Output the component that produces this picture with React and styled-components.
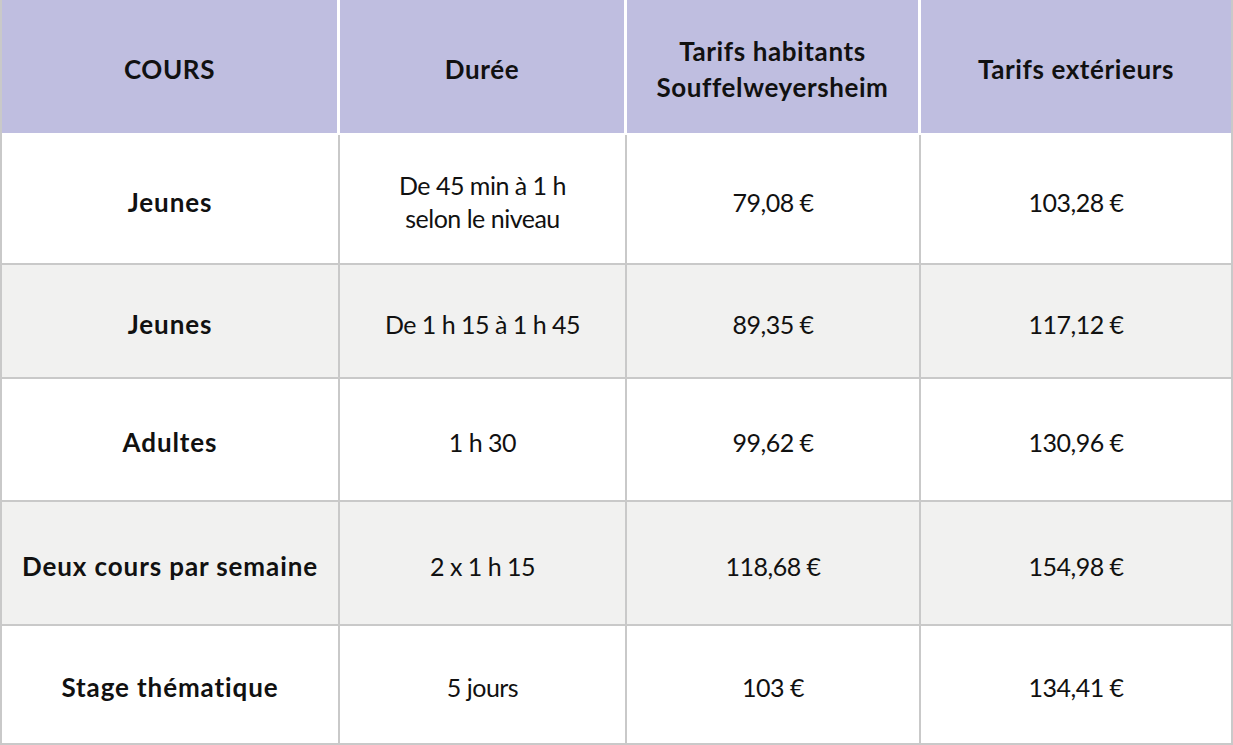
import React from 'react'
import styled, { createGlobalStyle } from 'styled-components'

const GlobalStyle = createGlobalStyle`
  html, body {
    margin: 0;
    padding: 0;
    background: #ffffff;
  }
  body {
    font-family: Lato, "Open Sans", "Liberation Sans", sans-serif;
    color: #111111;
  }
`

const COLS = '338px 287px 294px 1fr'

const Table = styled.div`
  width: 1233px;
  height: 745px;
  display: flex;
  flex-direction: column;
  box-sizing: border-box;
  border-left: 2px solid #c9c9c9;
  border-right: 2px solid #c9c9c9;
  border-bottom: 2px solid #c9c9c9;
`

const HeadRow = styled.div`
  display: grid;
  grid-template-columns: ${COLS};
  height: 135px;
  background: #bfbee0;
  border-bottom: 2px solid #ffffff;
  box-sizing: border-box;
`

const HeadCell = styled.div`
  display: flex;
  align-items: center;
  justify-content: center;
  text-align: center;
  font-weight: 700;
  font-size: 26px;
  line-height: 36px;
  letter-spacing: 0.6px;
  padding-top: 5px;
  box-sizing: border-box;
  border-right: 3px solid #ffffff;
  &:last-child { border-right: none; }
`

const Row = styled.div`
  display: grid;
  grid-template-columns: ${COLS};
  height: ${(p) => p.$h}px;
  background: ${(p) => (p.$shaded ? '#f1f1f0' : '#ffffff')};
  border-bottom: 2px solid #c9c9c9;
  box-sizing: border-box;
  &:last-child { border-bottom: none; }
`

const Cell = styled.div`
  display: flex;
  align-items: center;
  justify-content: center;
  text-align: center;
  font-weight: ${(p) => (p.$bold ? 700 : 400)};
  font-size: ${(p) => (p.$bold ? 26 : 25)}px;
  line-height: 33px;
  letter-spacing: ${(p) => (p.$bold ? '0.9px' : '-0.5px')};
  padding-top: 6px;
  box-sizing: border-box;
  border-right: 2px solid #c9c9c9;
  &:last-child { border-right: none; }
`

const rows = [
  { h: 130, cours: 'Jeunes', duree: ['De 45 min à 1 h', 'selon le niveau'], hab: '79,08 €', ext: '103,28 €' },
  { h: 114, cours: 'Jeunes', duree: ['De 1 h 15 à 1 h 45'], hab: '89,35 €', ext: '117,12 €' },
  { h: 123, cours: 'Adultes', duree: ['1 h 30'], hab: '99,62 €', ext: '130,96 €' },
  { h: 124, cours: 'Deux cours par semaine', duree: ['2 x 1 h 15'], hab: '118,68 €', ext: '154,98 €' },
  { h: 117, cours: 'Stage thématique', duree: ['5 jours'], hab: '103 €', ext: '134,41 €' },
]

export default function App() {
  return (
    <>
      <GlobalStyle />
      <Table>
        <HeadRow>
          <HeadCell>COURS</HeadCell>
          <HeadCell>Durée</HeadCell>
          <HeadCell>Tarifs habitants<br />Souffelweyersheim</HeadCell>
          <HeadCell>Tarifs extérieurs</HeadCell>
        </HeadRow>
        {rows.map((r, i) => (
          <Row key={i} $h={r.h} $shaded={i % 2 === 1}>
            <Cell $bold>{r.cours}</Cell>
            <Cell>
              <span>
                {r.duree.map((d, j) => (
                  <React.Fragment key={j}>
                    {j > 0 && <br />}
                    {d}
                  </React.Fragment>
                ))}
              </span>
            </Cell>
            <Cell>{r.hab}</Cell>
            <Cell>{r.ext}</Cell>
          </Row>
        ))}
      </Table>
    </>
  )
}
